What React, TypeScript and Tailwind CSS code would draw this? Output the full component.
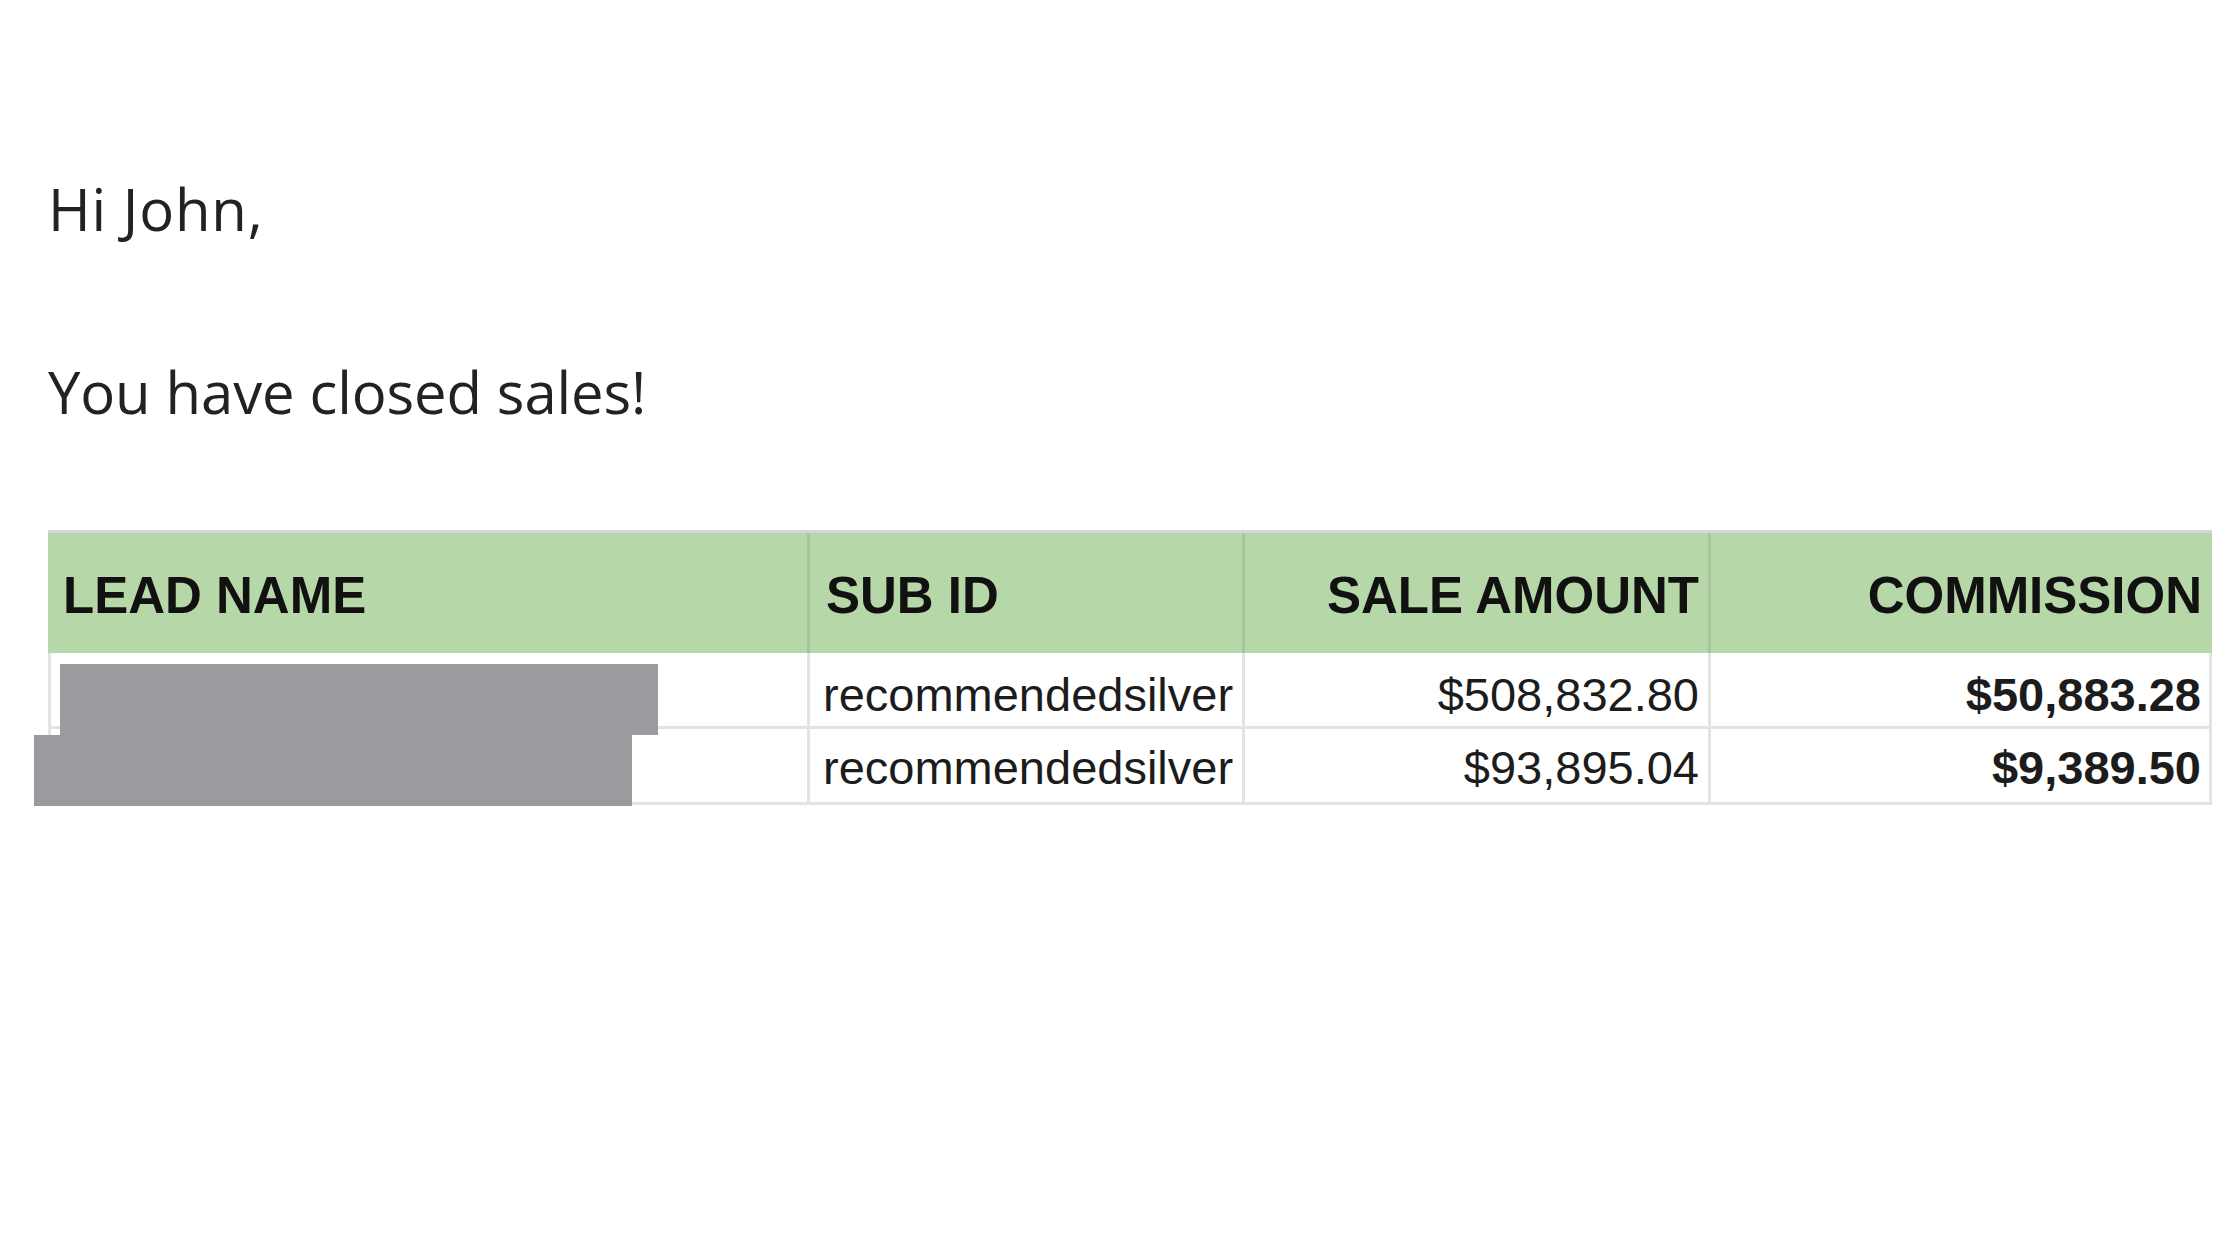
import React from "react";

const rows = [
  { sub: "recommendedsilver", sale: "$508,832.80", com: "$50,883.28", pt: "pt-[18px]" },
  { sub: "recommendedsilver", sale: "$93,895.04", com: "$9,389.50", pt: "pt-[15px]" },
];

export default function App() {
  return (
    <div className="w-[2240px] h-[1260px] bg-white overflow-hidden">
      <div className="pl-[48px] pt-[180px] text-[#222222] [font-family:'Open_Sans','Noto_Sans',sans-serif]">
        <p className="h-[58px] text-[58px] leading-[58px] tracking-[0.8px]">Hi John,</p>
        <p className="mt-[125px] h-[58px] text-[58px] leading-[58px] tracking-[-0.1px]">You have closed sales!</p>
      </div>
      <div className="relative ml-[48px] mt-[109px] w-[2164px] [font-family:'Liberation_Sans',Arial,sans-serif]">
        <div className="flex h-[123px] border-t-[3px] border-[#d3d5d6] bg-[#b6d7a8] text-[51px] font-bold leading-[51px] text-[#111111]">
          <div className="w-[762px] shrink-0 border-r-[3px] border-[#a6c598] pl-[15px] pt-[37px]">LEAD NAME</div>
          <div className="w-[435px] shrink-0 border-r-[3px] border-[#a6c598] pl-[16px] pt-[37px]">SUB ID</div>
          <div className="w-[466px] shrink-0 border-r-[3px] border-[#a6c598] pr-[9px] pt-[37px] text-right">SALE AMOUNT</div>
          <div className="w-[501px] shrink-0 pr-[10px] pt-[37px] text-right">COMMISSION</div>
        </div>
        {rows.map((r, i) => (
          <div
            key={i}
            className="flex h-[76px] border-b-[3px] border-x-[3px] border-[#e1e3e5] text-[47px] leading-[47px] text-[#1c1c1c]"
          >
            <div className="w-[759px] shrink-0 border-r-[3px] border-[#e1e3e5]"></div>
            <div className={`w-[435px] shrink-0 border-r-[3px] border-[#e1e3e5] pl-[13px] ${r.pt}`}>{r.sub}</div>
            <div className={`w-[466px] shrink-0 border-r-[3px] border-[#e1e3e5] pr-[9px] text-right ${r.pt}`}>{r.sale}</div>
            <div className={`w-[498px] shrink-0 pr-[8px] text-right font-bold ${r.pt}`}>{r.com}</div>
          </div>
        ))}
        <div className="absolute left-[12px] top-[134px] h-[71px] w-[598px] bg-[#999b9e]"></div>
        <div className="absolute left-[-14px] top-[205px] h-[71px] w-[598px] bg-[#999b9e]"></div>
      </div>
    </div>
  );
}
